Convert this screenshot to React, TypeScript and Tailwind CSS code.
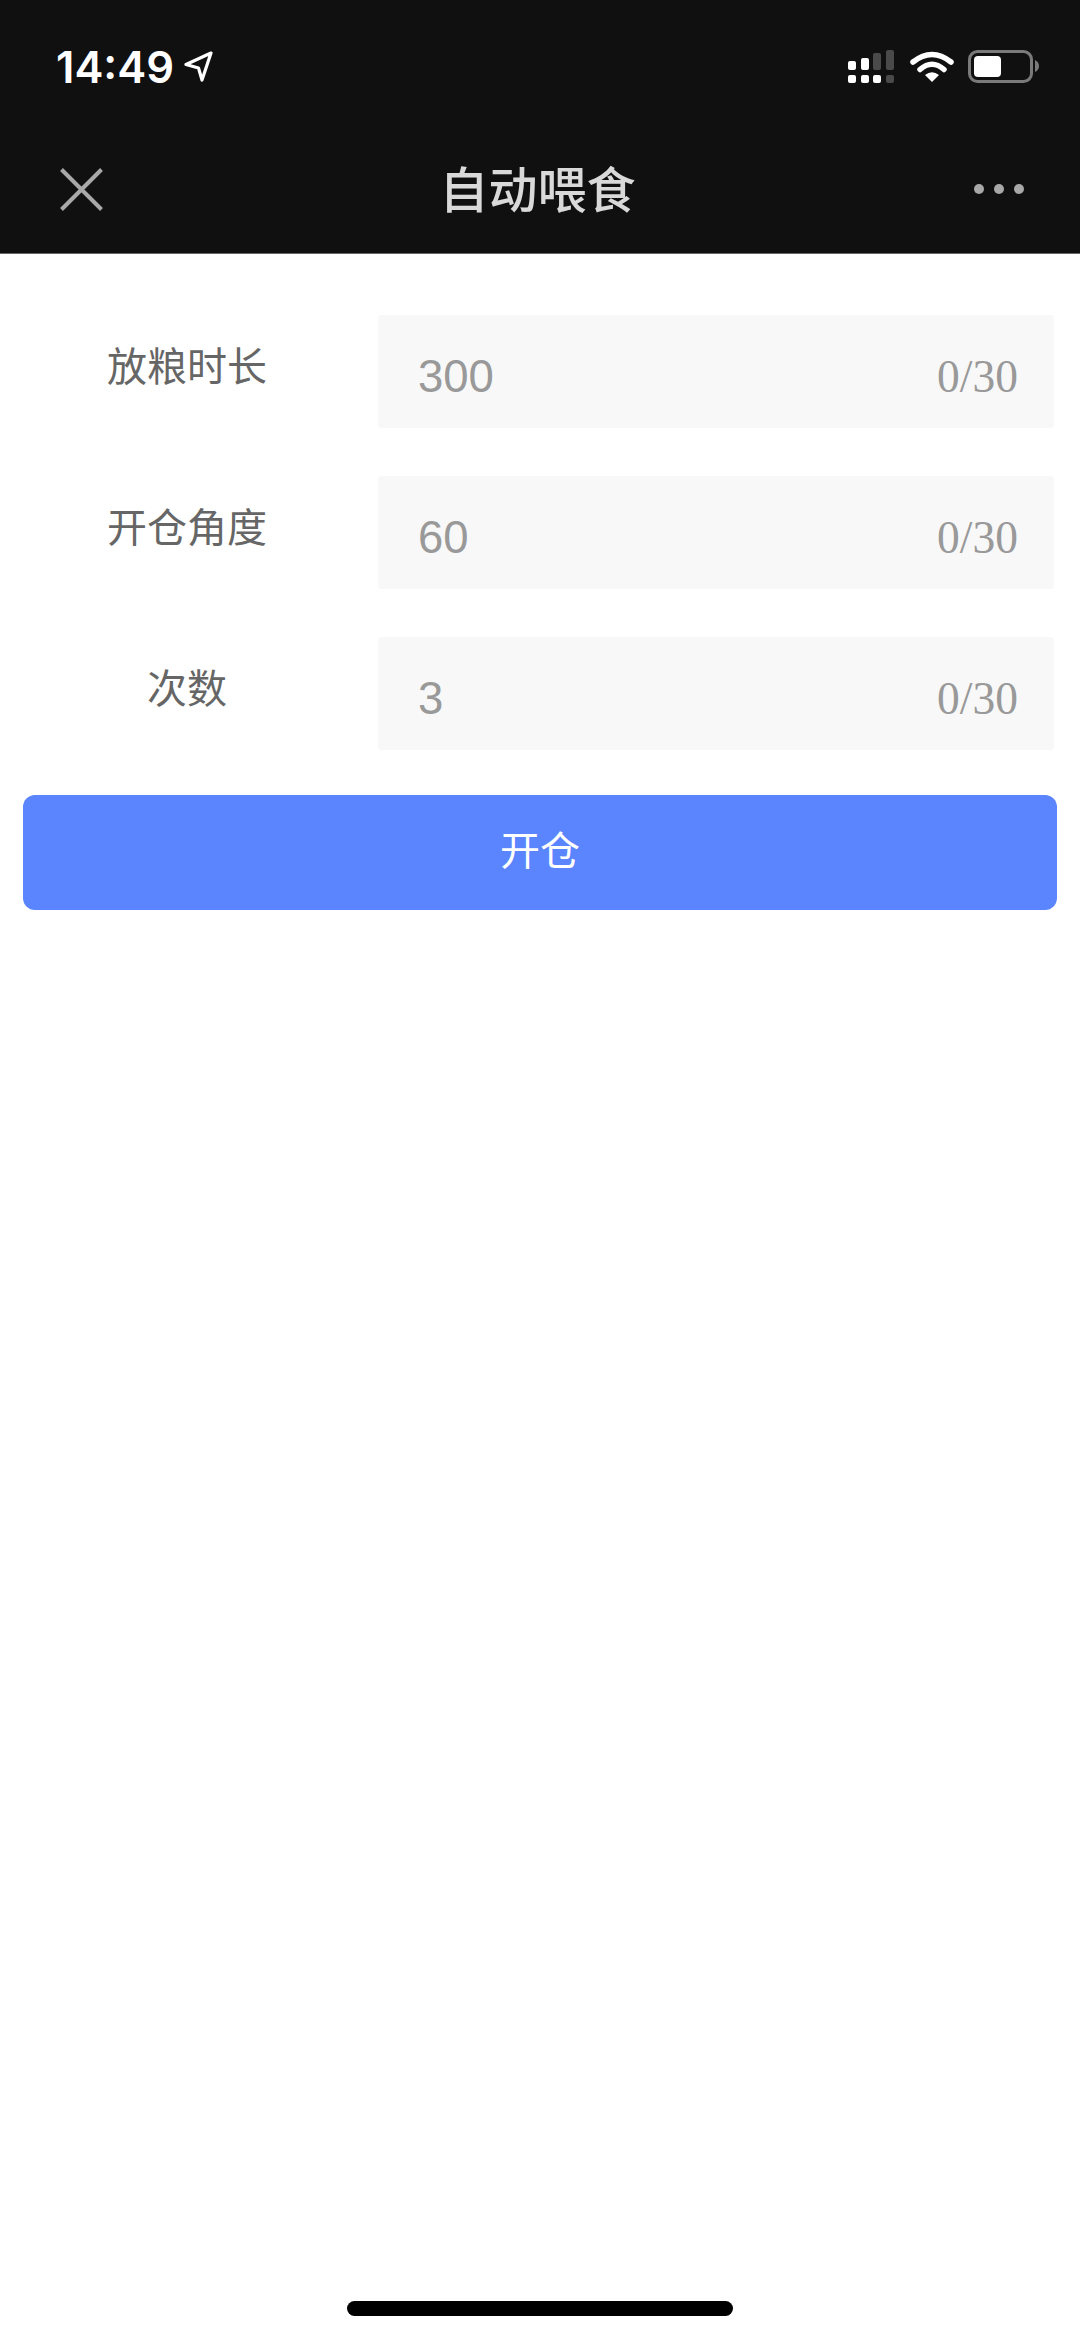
import React from "react";

const cjk = { fontFamily: '"Noto Sans CJK SC", "Liberation Sans", sans-serif' };

function Row({ label, value, mt }: { label: string; value: string; mt: string }) {
  return (
    <div className={`flex ${mt}`}>
      <div
        className="w-[374px] mr-[4px] h-[98px] flex items-center justify-center text-[40px] leading-none text-[#666666]"
        style={cjk}
      >
        {label}
      </div>
      <div className="w-[676px] h-[113px] bg-[#f8f8f8] rounded-[4px] flex items-center justify-between pl-[40px] pr-[36px] pt-[10px]">
        <span className="text-[45.5px] leading-none text-[#999999] font-['Liberation_Sans',sans-serif]">{value}</span>
        <span className="text-[45.5px] leading-none text-[#999999] font-['Liberation_Serif',serif]">0/30</span>
      </div>
    </div>
  );
}

export default function App() {
  return (
    <div className="w-[1080px] h-[2339px] bg-white flex flex-col overflow-hidden">
      <header className="h-[254px] bg-[#101010] border-b border-[#666666] shrink-0 flex flex-col">
        <div className="h-[130px] flex items-start justify-between pt-[42px]">
          <div className="flex items-center pl-[56px]">
            <span className="text-[43.5px] leading-[50px] font-semibold text-white font-['Inter',sans-serif]">14:49</span>
            <svg width="30" height="32" viewBox="0 0 30 32" className="ml-[10px]" fill="none">
              <path d="M27 2 L2 13.5 L14.5 17 L18 29 Z" stroke="#ffffff" strokeWidth="3.2" strokeLinejoin="round" />
            </svg>
          </div>
          <div className="flex items-start pr-[40px] mt-[8px]">
            <svg width="48" height="34" viewBox="0 0 48 34">
              <rect x="1" y="11" width="8" height="9" rx="2" fill="#fff" />
              <rect x="14" y="8" width="8" height="12" rx="2" fill="#fff" />
              <rect x="26" y="3" width="8" height="17" rx="2" fill="#4a4a4a" />
              <rect x="39" y="0" width="8" height="20" rx="2" fill="#4a4a4a" />
              <rect x="1" y="25" width="8" height="8" rx="2" fill="#fff" />
              <rect x="14" y="25" width="8" height="8" rx="2" fill="#fff" />
              <rect x="26" y="25" width="8" height="8" rx="2" fill="#fff" />
              <rect x="39" y="25" width="8" height="8" rx="2" fill="#4a4a4a" />
            </svg>
            <svg width="44" height="34" viewBox="0 0 44 34" className="ml-[15px]" fill="none">
              <path d="M3 12 Q22 -3 41 12" stroke="#fff" strokeWidth="5.5" strokeLinecap="round" />
              <path d="M10 19.5 Q22 9 34 19.5" stroke="#fff" strokeWidth="5.5" strokeLinecap="round" />
              <path d="M15 25 Q22 19.5 29 25 L22 32 Z" fill="#fff" />
            </svg>
            <svg width="72" height="34" viewBox="0 0 72 34" className="ml-[14px]" fill="none">
              <rect x="1.5" y="1.5" width="62" height="30" rx="8" stroke="#7a7a7a" strokeWidth="3" />
              <rect x="6" y="6" width="27" height="21" rx="4" fill="#fff" />
              <path d="M67 10 Q71 12 71 16 Q71 20 67 22 Z" fill="#7a7a7a" />
            </svg>
          </div>
        </div>
        <div className="relative flex-1 flex items-center justify-between pl-[60px] pr-[56px] pb-[5px]">
          <svg width="43" height="43" viewBox="0 0 43 43" fill="none">
            <path d="M1.5 1.5 L41.5 41.5 M41.5 1.5 L1.5 41.5" stroke="#a8a8a8" strokeWidth="4" />
          </svg>
          <div className="text-[49px] leading-none font-medium text-[#d9d9d9] absolute left-0 right-[5px] top-[32px] text-center" style={cjk}>
            自动喂食
          </div>
          <div className="flex gap-[10px]">
            <span className="w-[10px] h-[10px] rounded-full bg-[#a8a8a8]" />
            <span className="w-[10px] h-[10px] rounded-full bg-[#a8a8a8]" />
            <span className="w-[10px] h-[10px] rounded-full bg-[#a8a8a8]" />
          </div>
        </div>
      </header>

      <main className="flex-1 flex flex-col">
        <Row label="放粮时长" value="300" mt="mt-[61px]" />
        <Row label="开仓角度" value="60" mt="mt-[48px]" />
        <Row label="次数" value="3" mt="mt-[48px]" />
        <button
          className="mt-[45px] ml-[23px] w-[1034px] h-[115px] rounded-[12px] bg-[#5b84ff] text-white text-[40px] leading-none flex items-center justify-center pb-[9px]"
          style={cjk}
        >
          开仓
        </button>
      </main>

      <div className="h-[38px] shrink-0 flex justify-center">
        <div className="w-[386px] h-[15px] rounded-full bg-black" />
      </div>
    </div>
  );
}
